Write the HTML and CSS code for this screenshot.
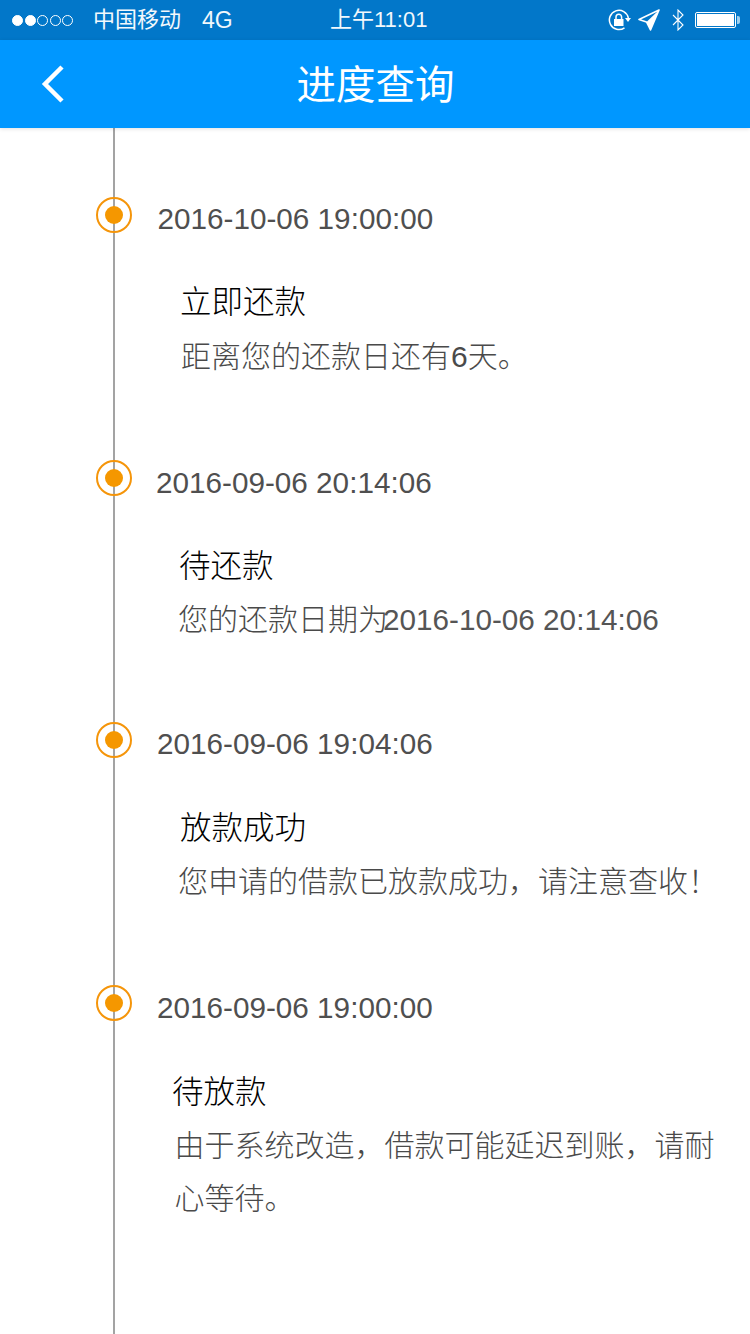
FILE: index.html
```html
<!DOCTYPE html>
<html>
<head>
<meta charset="utf-8" />
<title>进度查询</title>
<link rel="stylesheet" href="styles.css">
</head>
<body>
<div class="status">
  <div class="signal"><i class="on"></i><i class="on"></i><i></i><i></i><i></i></div>
  <span class="carrier">中国移动</span>
  <span class="net">4G</span>
  <span class="clock">上午11:01</span>
  <div class="status-icons">
    <svg width="23" height="22" viewBox="0 0 23 22"><path d="M16.5 18.8A9.6 9.6 0 1 1 20.4 9" fill="none" stroke="#fff" stroke-width="1.5"/><path d="M17 9h6l-3 4z" fill="#fff"/><rect x="6" y="10" width="9.5" height="7" fill="#fff"/><path d="M8 10V8a2.8 2.8 0 0 1 5.6 0v2" fill="none" stroke="#fff" stroke-width="1.5"/></svg>
    <svg width="22" height="22" viewBox="0 0 22 22"><path d="M21 1 1 10.5l7.5 2.5 4 8z" fill="none" stroke="#fff" stroke-width="1.6" stroke-linejoin="round"/><path d="M21 1 8.500 13l4 8z" fill="#fff"/></svg>
    <svg width="12" height="22" viewBox="0 0 12 22"><path d="M1 6l10 10-5 5V1l5 5L1 16" fill="none" stroke="#fff" stroke-width="1.1"/></svg>
    <div class="battery"><b></b></div>
  </div>
</div>
<div class="nav">
  <svg class="back" width="24" height="38" viewBox="0 0 24 38"><path d="M21 2 4 19l17 17" fill="none" stroke="#fff" stroke-width="4.5"/></svg>
  <h1>进度查询</h1>
</div>
<div class="timeline">
  <div class="item item1">
    <p class="time">2016-10-06 19:00:00</p>
    <p class="name">立即还款</p>
    <p class="desc">距离您的还款日还有6天。</p>
  </div>
  <div class="item item2">
    <p class="time">2016-09-06 20:14:06</p>
    <p class="name">待还款</p>
    <p class="desc">您的还款日期为<span class="num">2016-10-06 20:14:06</span></p>
  </div>
  <div class="item item3">
    <p class="time">2016-09-06 19:04:06</p>
    <p class="name">放款成功</p>
    <p class="desc">您申请的借款已放款成功，请注意查收！</p>
  </div>
  <div class="item item4">
    <p class="time">2016-09-06 19:00:00</p>
    <p class="name">待放款</p>
    <p class="desc">由于系统改造，借款可能延迟到账，请耐心等待。</p>
  </div>
</div>
</body>
</html>
```

FILE: styles.css
```css
*,*:before,*:after{padding:0;margin:0;box-sizing:border-box;}
body{width:750px;height:1334px;overflow:hidden;background:#fff;font-family:"Liberation Sans","Noto Sans CJK SC",sans-serif;}

.status{height:40px;background:#0277c9;color:#f2f8fc;display:flex;align-items:center;font-size:22px;line-height:40px;padding-left:12px;position:relative;}
.signal{display:flex;gap:1.5px;width:81px;}
.signal i{width:11px;height:11px;border:1px solid #fff;border-radius:50%;}
.signal i.on{background:#fff;}
.carrier{width:109px;}
.net{font-size:23px;}
.clock{position:absolute;left:330px;top:0;}
.status-icons{position:absolute;left:608px;top:9px;display:flex;align-items:center;}
.status-icons svg:nth-child(2){margin-left:7px;}
.status-icons svg:nth-child(3){margin-left:12px;}
.battery{width:41px;height:16px;margin-left:11px;border:1px solid #fff;border-radius:2px;padding:1px;position:relative;}
.battery b{display:block;height:100%;background:#fff;}
.battery:after{content:"";position:absolute;right:-5px;top:3px;width:3px;height:8px;background:#9fd0ee;border-radius:0 2px 2px 0;}

.nav{height:88px;background:#0097ff;position:relative;text-align:center;box-shadow:0 1px 4px rgba(0,0,0,.12);}
.nav h1{font-size:39.500px;font-weight:normal;color:#fff;line-height:90px;padding-left:1px;}
.back{position:absolute;left:41px;top:25px;}

.timeline{height:1206px;margin-left:113px;border-left:2px solid #a3a3a3;padding-top:71px;}
.item{position:relative;height:263px;}
.item:before{content:"";position:absolute;left:-19px;top:-2px;width:36px;height:36px;border:2px solid #f5950a;border-radius:50%;}
.item:after{content:"";position:absolute;left:-10px;top:7px;width:18px;height:18px;background:#f59700;border-radius:50%;}
.time{font-size:29.700px;line-height:40px;color:#4f4f4f;margin-left:42.500px;}
.name{font-size:31.500px;font-weight:300;line-height:44px;color:#000;margin:41px 0 0 65px;}
.desc{font-size:30px;font-weight:300;line-height:53px;color:#4a4a4a;margin:6px 0 0 66px;width:545px;}
.num{font-size:29.700px;margin-left:-5px;color:#555;}

.item2{height:262px;padding-top:1px;}
.item2 .time{margin-left:41px;}
.item2 .name{margin-left:64px;}
.item2 .desc{margin:5px 0 0 63px;white-space:nowrap;}
.item3 .time{margin-left:42px;}
.item3 .name{margin-left:65px;margin-top:42px;}
.item3 .desc{margin-left:63px;margin-top:5px;}
.item4{padding-top:1px;}
.item4 .time{margin-left:42px;}
.item4 .name{margin-left:57px;margin-top:42px;}
.item4 .desc{margin-left:59.500px;margin-top:5px;}
```
